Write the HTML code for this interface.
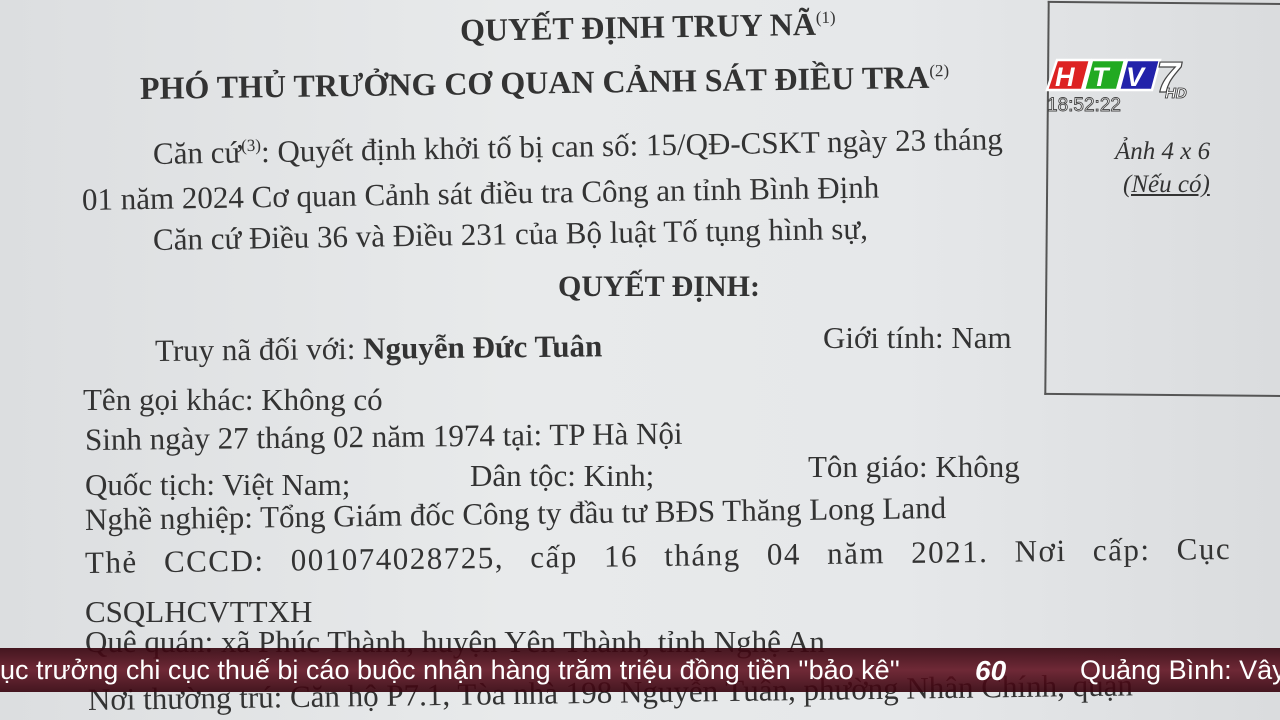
<!DOCTYPE html>
<html><head><meta charset="utf-8"><style>
body{margin:0;width:1280px;height:720px;overflow:hidden;background:#e4e6e8;font-family:"Liberation Serif",serif;color:#333;position:relative}
.bg{position:absolute;inset:0;background:linear-gradient(90deg,#dcdee0,#e8eaeb 40%,#e6e8ea 70%,#dadcde)}
.t{position:absolute;white-space:nowrap;font-size:31px;line-height:1;transform-origin:left center}
.b{font-weight:bold}
sup{font-size:17px;font-weight:normal}
.box{position:absolute;left:1046px;top:2px;width:245px;height:390px;border:2px solid #555;border-right:none;transform:rotate(0.5deg)}
.tick{position:absolute;left:0;top:648px;width:1280px;height:44px;background:linear-gradient(180deg,rgba(55,5,15,.92),rgba(95,15,30,.88) 50%,rgba(55,5,15,.92));}
.tt{position:absolute;top:655px;color:#fff;font-family:"Liberation Sans",sans-serif;font-size:27px;white-space:nowrap;transform-origin:left}
</style></head><body>
<div class="bg"></div>
<div class="t b" style="left:460px;top:14px;font-size:32px;transform:rotate(-1deg)">QUYẾT ĐỊNH TRUY NÃ<sup>(1)</sup></div>
<div class="t b" style="left:140px;top:72px;font-size:32px;transform:rotate(-0.8deg)">PHÓ THỦ TRƯỞNG CƠ QUAN CẢNH SÁT ĐIỀU TRA<sup>(2)</sup></div>
<div class="t" style="left:153px;top:138px;transform:rotate(-1deg)">Căn cứ<sup>(3)</sup>: Quyết định khởi tố bị can số: 15/QĐ-CSKT ngày 23 tháng</div>
<div class="t" style="left:82px;top:184px;transform:rotate(-0.9deg)">01 năm 2024 Cơ quan Cảnh sát điều tra Công an tỉnh Bình Định</div>
<div class="t" style="left:153px;top:224px;transform:rotate(-0.9deg)">Căn cứ Điều 36 và Điều 231 của Bộ luật Tố tụng hình sự,</div>
<div class="t b" style="left:558px;top:272px;font-size:30px">QUYẾT ĐỊNH:</div>
<div class="t" style="left:155px;top:335px;transform:rotate(-0.6deg)">Truy nã đối với: <b>Nguyễn Đức Tuân</b></div>
<div class="t" style="left:823px;top:322px;">Giới tính: Nam</div>
<div class="t" style="left:83px;top:384px;">Tên gọi khác: Không có</div>
<div class="t" style="left:85px;top:424px;transform:rotate(-0.6deg)">Sinh ngày 27 tháng 02 năm 1974 tại: TP Hà Nội</div>
<div class="t" style="left:85px;top:469px;">Quốc tịch: Việt Nam;</div>
<div class="t" style="left:470px;top:460px;">Dân tộc: Kinh;</div>
<div class="t" style="left:808px;top:451px;">Tôn giáo: Không</div>
<div class="t" style="left:85px;top:504px;transform:rotate(-0.8deg)">Nghề nghiệp: Tổng Giám đốc Công ty đầu tư BĐS Thăng Long Land</div>
<div class="t" style="left:85px;top:547px;word-spacing:17px;letter-spacing:1.5px;transform:rotate(-0.7deg)">Thẻ CCCD: 001074028725, cấp 16 tháng 04 năm 2021. Nơi cấp: Cục</div>
<div class="t" style="left:85px;top:596px;">CSQLHCVTTXH</div>
<div class="t" style="left:85px;top:626px;">Quê quán: xã Phúc Thành, huyện Yên Thành, tỉnh Nghệ An</div>
<div class="t" style="left:88px;top:684px;transform:rotate(-0.8deg)">Nơi thường trú: Căn hộ P7.1, Tòa nhà 198 Nguyễn Tuân, phường Nhân Chính, quận</div>
<div class="box"></div>
<div class="t" style="left:1115px;top:139px;font-style:italic;font-size:25px">Ảnh 4 x 6</div>
<div class="t" style="left:1123px;top:172px;font-style:italic;font-size:25px;text-decoration:underline">(Nếu có)</div>
<svg style="position:absolute;left:1045px;top:58px" width="150" height="58" viewBox="0 0 150 58">
<polygon points="12,2 45,2 37,32 2,32" fill="#d22" stroke="#fff" stroke-width="2.5"/>
<polygon points="47,2 80,2 72,32 39,32" fill="#2a2" stroke="#fff" stroke-width="2.5"/>
<polygon points="82,2 115,2 107,32 74,32" fill="#22a" stroke="#fff" stroke-width="2.5"/>
<text x="10" y="28" font-family="Liberation Sans" font-weight="bold" font-style="italic" font-size="27" fill="#fff">H</text>
<text x="47" y="28" font-family="Liberation Sans" font-weight="bold" font-style="italic" font-size="27" fill="#fff">T</text>
<text x="81" y="28" font-family="Liberation Sans" font-weight="bold" font-style="italic" font-size="27" fill="#fff">V</text>
<text x="111" y="34" font-family="Liberation Sans" font-weight="bold" font-style="italic" font-size="44" fill="#fff" stroke="#444" stroke-width="1.2">7</text>
<text x="120" y="40" font-family="Liberation Sans" font-weight="bold" font-style="italic" font-size="15" fill="#fff" stroke="#333" stroke-width=".8">HD</text>
<text x="2" y="53" font-family="Liberation Sans" font-size="19" fill="#fff" stroke="#444" stroke-width=".9">18:52:22</text>
</svg>
<div class="tick"></div>
<div class="tt" style="left:0">ục trưởng chi cục thuế bị cáo buộc nhận hàng trăm triệu đồng tiền ''bảo kê''</div>
<div class="tt" style="left:975px;font-weight:bold;font-style:italic;font-size:28px">60</div>
<div class="tt" style="left:1080px">Quảng Bình: Vây</div>
</body></html>
